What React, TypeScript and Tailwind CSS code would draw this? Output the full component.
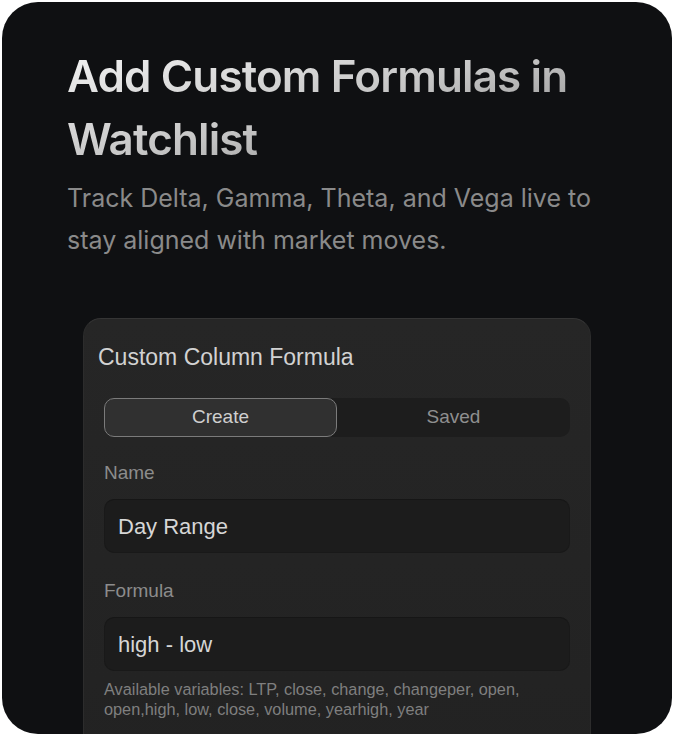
import React from 'react';

const Field = ({ label, value, first }: { label: string; value: string; first?: boolean }) => (
  <div className={first ? 'mt-[24px]' : 'mt-[26px]'}>
    <div className="text-[19px] leading-[24px] text-[#8c8c8c]">{label}</div>
    <div className="mt-[14px] h-[54px] rounded-[10px] bg-[#1c1c1c] border border-[#191919] border-t-[#161616] flex items-center px-[13px] text-[22px] text-[#d6d6d6]">
      {value}
    </div>
  </div>
);

export default function App() {
  return (
    <div className="w-[674px] h-[736px] bg-white p-[2px]">
      <div className="h-full rounded-[36px] bg-[#0f1012] overflow-hidden px-[65px] pt-[43px]">
        {/* heading */}
        <h1
          className="text-[44px] leading-[63px] font-semibold tracking-[-0.02em] bg-linear-to-br from-[#f6f6f6] via-[#c6c6c6] to-[#7c7c7c] bg-clip-text text-transparent w-fit"
          style={{ fontFamily: 'Inter, "Noto Sans", sans-serif' }}
        >
          Add Custom Formulas in
          <br />
          Watchlist
        </h1>
        <p
          className="mt-[6px] text-[25px] leading-[42px] text-[#8a8a8a]"
          style={{ fontFamily: 'Inter, "Noto Sans", sans-serif' }}
        >
          Track Delta, Gamma, Theta, and Vega live to
          <br />
          stay aligned with market moves.
        </p>

        {/* formula panel */}
        <div
          className="mt-[57px] mx-[16px] h-[480px] rounded-[18px] bg-linear-to-b from-[#262626] to-[#222222] border border-[#2c2c2c] border-t-[#353535] px-[20px] pt-[24px]"
          style={{ fontFamily: '"Liberation Sans", Arial, sans-serif' }}
        >
          <div className="-ml-[6px] text-[23px] leading-[28px] text-[#d2d2d2]">Custom Column Formula</div>

          <div className="mt-[27px] h-[39px] rounded-[10px] bg-[#1d1d1d] flex">
            <div className="w-[233px] h-full rounded-[10px] border border-[#7b7b7b] bg-[#303030] flex items-center justify-center text-[19px] text-[#cfcfcf]">
              Create
            </div>
            <div className="flex-1 flex items-center justify-center text-[19px] text-[#8f8f8f]">Saved</div>
          </div>

          <Field label="Name" value="Day Range" first />
          <Field label="Formula" value="high - low" />

          <p className="mt-[8px] text-[16.3px] leading-[20px] text-[#7f7f7f]">
            Available variables: LTP, close, change, changeper, open,
            <br />
            open,high, low, close, volume, yearhigh, year
          </p>
        </div>
      </div>
    </div>
  );
}
